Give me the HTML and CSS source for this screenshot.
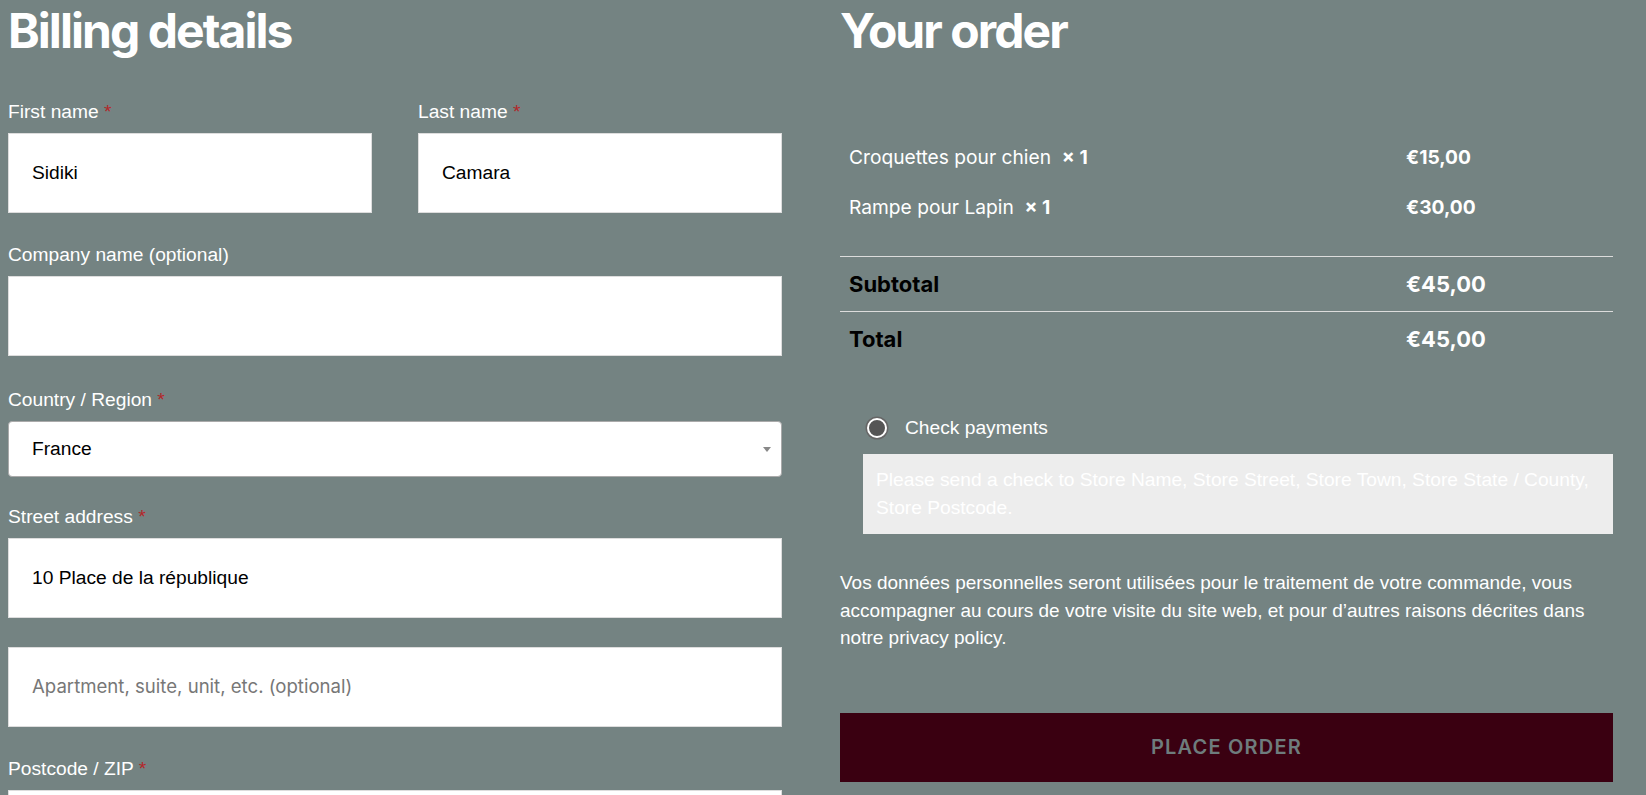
FILE: index.html
```html
<!DOCTYPE html>
<html lang="fr">
<head>
<meta charset="utf-8">
<title>Checkout</title>
<link rel="stylesheet" href="styles.css">
</head>
<body>
<div class="checkout">
  <section class="billing">
    <h2 class="title title--billing">Billing details</h2>

    <div class="pair">
      <div class="field">
        <label class="label">First name <span class="req">*</span></label>
        <input class="input" type="text" value="Sidiki">
      </div>
      <div class="field">
        <label class="label">Last name <span class="req">*</span></label>
        <input class="input" type="text" value="Camara">
      </div>
    </div>

    <div class="field field--company">
      <label class="label">Company name (optional)</label>
      <input class="input" type="text" value="">
    </div>

    <div class="field field--country">
      <label class="label">Country / Region <span class="req">*</span></label>
      <div class="select">
        <span class="select-value">France</span>
        <svg class="select-arrow" width="8" height="5" viewBox="0 0 8 5"><path d="M0 0H8L4 5Z" fill="#888"/></svg>
      </div>
    </div>

    <div class="field field--street">
      <label class="label">Street address <span class="req">*</span></label>
      <input class="input" type="text" value="10 Place de la république">
    </div>

    <div class="field">
      <input class="input" type="text" placeholder="Apartment, suite, unit, etc. (optional)">
    </div>

    <div class="field">
      <label class="label">Postcode / ZIP <span class="req">*</span></label>
      <input class="input" type="text" value="">
    </div>
  </section>

  <section class="order">
    <h2 class="title title--order">Your order</h2>

    <div class="items">
      <div class="line">
        <div class="cell">Croquettes pour chien&nbsp; <strong class="qty">×&nbsp;1</strong></div>
        <div class="cell price">€15,00</div>
      </div>
      <div class="line">
        <div class="cell">Rampe pour Lapin&nbsp; <strong class="qty">×&nbsp;1</strong></div>
        <div class="cell price">€30,00</div>
      </div>
    </div>

    <div class="totals">
      <div class="total-row">
        <div class="cell total-label">Subtotal</div>
        <div class="cell total-price">€45,00</div>
      </div>
      <div class="total-row">
        <div class="cell total-label">Total</div>
        <div class="cell total-price">€45,00</div>
      </div>
    </div>

    <div class="payment">
      <div class="method">
        <span class="radio"></span>
        <span class="method-name">Check payments</span>
      </div>
      <div class="payment-box">Please send a check to Store Name, Store Street, Store Town, Store State / County, Store Postcode.</div>
    </div>

    <p class="privacy">Vos données personnelles seront utilisées pour le traitement de votre commande, vous accompagner au cours de votre visite du site web, et pour d’autres raisons décrites dans notre privacy policy.</p>

    <button class="place-order" type="button">Place order</button>
  </section>
</div>
</body>
</html>
```

FILE: styles.css
```css
* { box-sizing: border-box; }

html, body {
  margin: 0;
  padding: 0;
  background: #748382;
  color: #ffffff;
  font-family: "Liberation Sans", Arial, sans-serif;
  overflow: hidden;
}

.checkout {
  display: grid;
  grid-template-columns: 774px 773px;
  column-gap: 58px;
  padding-left: 8px;
}

.title {
  font-family: Inter, "Noto Sans", sans-serif;
  font-weight: 700;
  font-size: 48px;
  line-height: 58px;
  letter-spacing: -1.95px;
  margin: 2px 0 0;
  color: #ffffff;
}

.title--billing { margin-bottom: 40px; }
.title--order { margin-bottom: 72px; }

/* ---------- billing form ---------- */
.pair {
  display: grid;
  grid-template-columns: 1fr 1fr;
  column-gap: 46px;
}

.field { margin-bottom: 30px; }
.field--company { margin-bottom: 32px; }
.field--country { margin-bottom: 28px; }
.field--street { margin-bottom: 29px; }

.label {
  display: block;
  font-size: 19.2px;
  line-height: 24px;
  margin-bottom: 9px;
  color: #ffffff;
}

.req { color: #b3272a; }

.input {
  display: block;
  width: 100%;
  height: 80px;
  margin: 0;
  border: 1px solid #dddddd;
  border-radius: 0;
  background: #ffffff;
  padding: 0 23px;
  font-family: "Liberation Sans", Arial, sans-serif;
  font-size: 19.2px;
  color: #000000;
  outline: none;
}

.input::placeholder {
  font-family: Inter, "Noto Sans", sans-serif;
  color: #777777;
  font-size: 18.6px;
}

.select {
  display: flex;
  align-items: center;
  justify-content: space-between;
  height: 56px;
  background: #ffffff;
  border: 1px solid #aaaaaa;
  border-radius: 4px;
  padding: 0 10px 0 23px;
  color: #000000;
  font-size: 19.2px;
}

.select-arrow { display: block; margin-top: 1px; }

/* ---------- order review ---------- */
.line,
.total-row {
  display: grid;
  grid-template-columns: 557px 1fr;
  align-items: center;
}

.line { height: 50px; }

.items { padding-bottom: 24px; }

.cell { padding: 0 9px; }

.line .cell {
  font-family: Inter, "Noto Sans", sans-serif;
  font-size: 19.2px;
  color: #ffffff;
}

.qty { font-weight: 700; }

.price { font-weight: 700; }

.total-row {
  height: 55px;
  border-top: 1px solid #dcdcdc;
}

.total-label {
  font-family: Inter, "Noto Sans", sans-serif;
  font-weight: 700;
  font-size: 22px;
  color: #000000;
}

.total-price {
  font-family: Inter, "Noto Sans", sans-serif;
  font-weight: 700;
  font-size: 22px;
  color: #ffffff;
}

/* ---------- payment ---------- */
.payment { margin-top: 50px; }

.method {
  display: flex;
  align-items: center;
  height: 24px;
  padding-left: 27px;
  gap: 18px;
}

.radio {
  width: 20px;
  height: 20px;
  border-radius: 50%;
  background: #555555;
  border: 2px solid #ffffff;
  box-shadow: 0 0 0 1.5px #666666;
  flex: none;
}

.method-name {
  font-size: 19.2px;
  color: #ffffff;
}

.payment-box {
  margin: 14px 0 0 23px;
  background: #ededed;
  color: #ffffff;
  font-size: 19.2px;
  line-height: 28px;
  padding: 12px 13px;
  height: 80px;
}

.privacy {
  margin: 35px 0 0;
  font-size: 19px;
  line-height: 27.5px;
  color: #ffffff;
}

.place-order {
  display: block;
  width: 100%;
  height: 69px;
  margin-top: 61px;
  border: 0;
  border-radius: 0;
  background: #3a0011;
  color: #6e7c7d;
  font-family: Inter, "Noto Sans", sans-serif;
  font-weight: 600;
  font-size: 20px;
  letter-spacing: 1.2px;
  text-transform: uppercase;
}
```
